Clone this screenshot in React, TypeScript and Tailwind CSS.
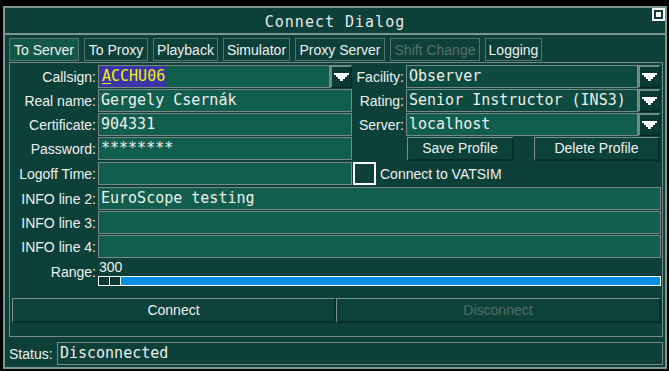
import React from 'react';

const label = "font-['Liberation_Sans',Arial,sans-serif] text-[14px] text-[#f0f0f0] leading-none";
const mono = "font-['DejaVu_Sans_Mono',monospace] text-[15px] text-[#eeeeea] leading-none";

const Arrow = () => (
  <svg width="15" height="8" viewBox="0 0 15 8">
    <polygon
      fill="#ffffff"
      points="0,0 15,0 15,2 13,2 13,4 11,4 11,6 9,6 9,8 6,8 6,6 4,6 4,4 2,4 2,2 0,2"
    />
  </svg>
);

const DropButton = () => (
  <div className="w-[22px] h-[23px] flex items-start justify-center pt-[6px] bg-[#0a3b33] border-t-2 border-l-2 border-t-[#6f8b83] border-l-[#6f8b83] border-b border-r border-b-[#05241f] border-r-[#05241f]">
    <Arrow />
  </div>
);

const Field = ({ value, dark = false, children }: { value?: string; dark?: boolean; children?: React.ReactNode }) => (
  <div
    className={`flex-1 h-[23px] border border-[#7b8883] flex items-center pl-[2px] ${
      dark ? 'bg-[#0d4a3f]' : 'bg-[#115e4f]'
    }`}
  >
    {children ?? <span className={mono}>{value}</span>}
  </div>
);

const Label = ({ text, w = 'w-[88px]' }: { text: string; w?: string }) => (
  <div className={`${w} h-[23px] flex items-center justify-end pr-[2px] ${label}`}>{text}</div>
);

const Bevel = ({ text, disabled = false, cls }: { text: string; disabled?: boolean; cls: string }) => (
  <div
    className={`${cls} flex items-center justify-center bg-[#0c4239] border-t border-l border-t-[#7a918a] border-l-[#7a918a] border-b-2 border-r-2 border-b-[#072d27] border-r-[#072d27] font-['Liberation_Sans',Arial,sans-serif] text-[14px] ${
      disabled ? 'text-[#566d66]' : 'text-[#f0f0f0]'
    }`}
  >
    {text}
  </div>
);

const tabs: { name: string; w: string; active?: boolean; disabled?: boolean }[] = [
  { name: 'To Server', w: 'w-[70px]', active: true },
  { name: 'To Proxy', w: 'w-[64px]' },
  { name: 'Playback', w: 'w-[65px]' },
  { name: 'Simulator', w: 'w-[67px]' },
  { name: 'Proxy Server', w: 'w-[90px]' },
  { name: 'Shift Change', w: 'w-[90px]', disabled: true },
  { name: 'Logging', w: 'w-[57px]' },
];

export default function App() {
  return (
    <div className="w-[669px] h-[371px] bg-black pt-[6px] pl-[3px] overflow-hidden">
      <div className="w-[664px] h-[363px] border-2 border-[#7d978f] bg-[#0c4038] flex flex-col">
        {/* title bar */}
        <div className="h-[25px] flex items-center">
          <div className="flex-1" />
          <div className="pt-[3px] font-['DejaVu_Sans_Mono',monospace] text-[15px] tracking-[1px] text-[#e8e8e8] leading-none">
            Connect Dialog
          </div>
          <div className="flex-1 flex justify-end self-start">
            <div className="w-[13px] h-[13px] border-2 border-white p-[2px] bg-[#0c4038]">
              <div className="w-full h-full bg-white" />
            </div>
          </div>
        </div>
        <div className="h-[2px] bg-[#7d978f]" />

        <div className="pl-[4px] pr-[2px] pt-[3px] flex flex-col">
          {/* tabs */}
          <div className="flex gap-[5px] h-[23px]">
            {tabs.map((t) => (
              <div
                key={t.name}
                className={`${t.w} h-[23px] flex items-center justify-center border border-[#56756c] font-['Liberation_Sans',Arial,sans-serif] text-[14px] leading-none ${
                  t.active ? 'bg-[#135847]' : 'bg-[#0c4038]'
                } ${t.disabled ? 'text-[#5d7069]' : 'text-[#f0f0f0]'}`}
              >
                {t.name}
              </div>
            ))}
          </div>

          {/* panel */}
          <div className="mt-[1px] h-[275px] w-[654px] border border-[#7b8a85] flex flex-col pt-[2px]">
            <div className="flex flex-col gap-[1px]">
              <div className="flex h-[23px]">
                <Label text="Callsign:" />
                <div className="w-[254px] flex">
                  <Field>
                    <span className="h-full flex items-center bg-[#3a36a8] pr-[1px] -ml-[1px] pl-[2px]">
                      <span className="font-['DejaVu_Sans_Mono',monospace] text-[15px] leading-none text-[#f2f000]">
                        <span className="underline underline-offset-2">A</span>CCHU06
                      </span>
                    </span>
                  </Field>
                  <DropButton />
                </div>
                <Label text="Facility:" w="w-[54px]" />
                <div className="w-[254px] flex">
                  <Field value="Observer" dark />
                  <DropButton />
                </div>
              </div>

              <div className="flex h-[23px]">
                <Label text="Real name:" />
                <div className="w-[254px] flex">
                  <Field value="Gergely Csernák" />
                </div>
                <Label text="Rating:" w="w-[54px]" />
                <div className="w-[254px] flex">
                  <Field value="Senior Instructor (INS3)" dark />
                  <DropButton />
                </div>
              </div>

              <div className="flex h-[23px]">
                <Label text="Certificate:" />
                <div className="w-[254px] flex">
                  <Field value="904331" />
                </div>
                <Label text="Server:" w="w-[54px]" />
                <div className="w-[254px] flex">
                  <Field value="localhost" />
                  <DropButton />
                </div>
              </div>

              <div className="flex h-[23px]">
                <Label text="Password:" />
                <div className="w-[254px] flex">
                  <Field value="********" />
                </div>
                <div className="w-[54px]" />
                <div className="w-[254px] flex">
                  <Bevel text="Save Profile" cls="w-[107px] h-[24px] ml-[1px]" />
                  <Bevel text="Delete Profile" cls="w-[126px] h-[24px] ml-auto" />
                </div>
              </div>

              <div className="flex h-[24px] mt-[1px]">
                <Label text="Logoff Time:" />
                <div className="w-[254px] flex">
                  <Field />
                </div>
                <div className="ml-[1px] w-[23px] h-[23px] border-2 border-white bg-[#0c4038]" />
                <div className={`ml-[4px] h-[24px] flex items-center ${label}`}>Connect to VATSIM</div>
              </div>

              <div className="flex h-[23px]">
                <Label text="INFO line 2:" />
                <div className="w-[563px] flex">
                  <Field value="EuroScope testing" />
                </div>
              </div>
              <div className="flex h-[23px]">
                <Label text="INFO line 3:" />
                <div className="w-[563px] flex">
                  <Field />
                </div>
              </div>
              <div className="flex h-[23px]">
                <Label text="INFO line 4:" />
                <div className="w-[563px] flex">
                  <Field />
                </div>
              </div>
            </div>

            {/* range */}
            <div className="flex">
              <div className={`w-[88px] pr-[2px] mt-[7px] text-right ${label}`}>Range:</div>
              <div className="w-[563px] flex flex-col mt-[2px]">
                <div className={`h-[16px] ${label} pl-[1px]`}>300</div>
                <div className="h-[10px] border border-white bg-[#0a8fe9] flex">
                  <div className="w-[11px] h-full bg-[#0b3a32] border-r border-white" />
                  <div className="w-[11px] h-full bg-[#0b3a32] border-r border-white" />
                </div>
              </div>
            </div>

            {/* connect buttons */}
            <div className="flex pl-[2px] mt-[12px]">
              <Bevel text="Connect" cls="w-[324px] h-[25px]" />
              <Bevel text="Disconnect" disabled cls="w-[325px] h-[25px]" />
            </div>
          </div>

          {/* status */}
          <div className="flex items-center mt-[5px] h-[23px]">
            <div className={`w-[48px] ${label}`}>Status:</div>
            <div className="w-[607px] h-[23px] border border-[#7b8883] bg-[#0c4038] flex items-center pl-[2px]">
              <span className={mono}>Disconnected</span>
            </div>
          </div>
        </div>
      </div>
    </div>
  );
}
